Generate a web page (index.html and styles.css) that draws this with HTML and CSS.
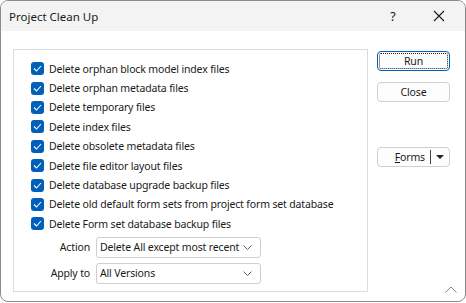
FILE: index.html
```html
<!DOCTYPE html>
<html lang="en">
<head>
    <meta charset="utf-8" />
    <title>Project Clean Up</title>
    <link rel="stylesheet" href="styles.css">
</head>
<body>
    <div class="window">
        <div class="titlebar">
            <span class="title">Project Clean Up</span>
            <span class="help">?</span>
            <span class="close">
                <svg width="12" height="12" viewBox="0 0 12 12"><path d="M1 1L11 11M11 1L1 11" stroke="#1a1a1a" stroke-width="1.1" fill="none"/></svg>
            </span>
        </div>
        <div class="content">
            <div class="group">
                <label class="check"><span class="box"><svg width="9" height="7" viewBox="0 0 9 7"><path d="M1 3.5L3.5 6L8 1" stroke="#fff" stroke-width="1.1" fill="none"/></svg></span>Delete orphan block model index files</label>
                <label class="check"><span class="box"><svg width="9" height="7" viewBox="0 0 9 7"><path d="M1 3.5L3.5 6L8 1" stroke="#fff" stroke-width="1.1" fill="none"/></svg></span>Delete orphan metadata files</label>
                <label class="check"><span class="box"><svg width="9" height="7" viewBox="0 0 9 7"><path d="M1 3.5L3.5 6L8 1" stroke="#fff" stroke-width="1.1" fill="none"/></svg></span>Delete temporary files</label>
                <label class="check"><span class="box"><svg width="9" height="7" viewBox="0 0 9 7"><path d="M1 3.5L3.5 6L8 1" stroke="#fff" stroke-width="1.1" fill="none"/></svg></span>Delete index files</label>
                <label class="check"><span class="box"><svg width="9" height="7" viewBox="0 0 9 7"><path d="M1 3.5L3.5 6L8 1" stroke="#fff" stroke-width="1.1" fill="none"/></svg></span>Delete obsolete metadata files</label>
                <label class="check"><span class="box"><svg width="9" height="7" viewBox="0 0 9 7"><path d="M1 3.5L3.5 6L8 1" stroke="#fff" stroke-width="1.1" fill="none"/></svg></span>Delete file editor layout files</label>
                <label class="check"><span class="box"><svg width="9" height="7" viewBox="0 0 9 7"><path d="M1 3.5L3.5 6L8 1" stroke="#fff" stroke-width="1.1" fill="none"/></svg></span>Delete database upgrade backup files</label>
                <label class="check"><span class="box"><svg width="9" height="7" viewBox="0 0 9 7"><path d="M1 3.5L3.5 6L8 1" stroke="#fff" stroke-width="1.1" fill="none"/></svg></span>Delete old default form sets from project form set database</label>
                <label class="check"><span class="box"><svg width="9" height="7" viewBox="0 0 9 7"><path d="M1 3.5L3.5 6L8 1" stroke="#fff" stroke-width="1.1" fill="none"/></svg></span>Delete Form set database backup files</label>

                <div class="field first">
                    <span class="flabel">Action</span>
                    <div class="combo">
                        <span>Delete All except most recent</span>
                        <svg width="9" height="5" viewBox="0 0 9 5"><path d="M0.5 0.5L4.5 4.5L8.5 0.5" stroke="#555" stroke-width="0.9" fill="none"/></svg>
                    </div>
                </div>
                <div class="field">
                    <span class="flabel">Apply to</span>
                    <div class="combo">
                        <span>All Versions</span>
                        <svg width="9" height="5" viewBox="0 0 9 5"><path d="M0.5 0.5L4.5 4.5L8.5 0.5" stroke="#555" stroke-width="0.9" fill="none"/></svg>
                    </div>
                </div>
            </div>

            <div class="buttons">
                <div class="btn default"><span>Run</span></div>
                <div class="btn">Close</div>
                <div class="btn forms">
                    <span class="fl"><u>F</u>orms</span>
                    <span class="sep"></span>
                    <span class="arrow"></span>
                </div>
            </div>
        </div>
        <svg class="grip" width="12" height="7" viewBox="0 0 12 7"><path d="M0.5 6.5L6 1L11.5 6.5" stroke="#777" stroke-width="0.9" fill="none"/></svg>
    </div>
</body>
</html>
```

FILE: styles.css
```css
* {
    margin: 0;
    padding: 0;
    box-sizing: border-box;
}

body {
    background: #ffffff;
    font-family: 'Noto Sans', 'Open Sans', sans-serif;
    font-size: 10.5px;
    letter-spacing: -0.15px;
    color: #1a1a1a;
}

.window {
    width: 466px;
    height: 302px;
    border: 1px solid #8a8a8a;
    border-radius: 8px;
    overflow: hidden;
    background: #fff;
    position: relative;
}

.titlebar {
    height: 30px;
    background: #f3f3f3;
    display: flex;
    align-items: center;
    padding-left: 8px;
}

    .titlebar .title {
        flex: 1;
        font-size: 11.5px;
        letter-spacing: 0;
    }

    .titlebar .help {
        width: 46px;
        text-align: center;
        font-size: 12.5px;
    }

    .titlebar .close {
        width: 46px;
        display: flex;
        justify-content: center;
        margin-right: 3px;
    }

.content {
    display: flex;
    padding: 18px 0 0 12px;
}

.group {
    width: 355px;
    height: 243px;
    border: 1px solid #dcdcdc;
    padding: 9px 0 0 17px;
    display: flex;
    flex-direction: column;
}

.check {
    display: flex;
    align-items: center;
    height: 19.4px;
    white-space: nowrap;
}

    .check .box {
        width: 13px;
        height: 13px;
        background: #005fb8;
        border-radius: 3px;
        margin-right: 5px;
        display: flex;
        align-items: center;
        justify-content: center;
    }

.field {
    display: flex;
    align-items: center;
    margin-top: 5px;
}

    .field.first {
        margin-top: 3px;
    }

.flabel {
    width: 59px;
    text-align: right;
    margin-right: 6px;
}

.combo {
    width: 165px;
    height: 21px;
    border: 1px solid #cfcfcf;
    border-radius: 3px;
    display: flex;
    align-items: center;
    justify-content: space-between;
    padding: 0 8px 0 3px;
    white-space: nowrap;
}

.buttons {
    display: flex;
    flex-direction: column;
    padding: 2px 0 0 9px;
}

.btn {
    width: 73px;
    height: 20px;
    border: 1px solid #d0d0d0;
    border-radius: 4px;
    display: flex;
    align-items: center;
    justify-content: center;
    margin-bottom: 11px;
    background: #fdfdfd;
}

    .btn.default {
        border: 1px solid #005fb8;
        padding: 1px;
    }

        .btn.default span {
            flex: 1;
            align-self: stretch;
            border: 1px dotted #222;
            display: flex;
            align-items: center;
            justify-content: center;
            border-radius: 2px;
        }

    .btn.forms {
        margin-top: 34px;
        justify-content: flex-end;
        padding-right: 5px;
    }

        .btn.forms .sep {
            width: 1px;
            height: 14px;
            background: #444;
            margin: 0 5px 0 5px;
        }

        .btn.forms .arrow {
            width: 0;
            height: 0;
            border-left: 4px solid transparent;
            border-right: 4px solid transparent;
            border-top: 4px solid #222;
        }

.grip {
    position: absolute;
    right: 8px;
    bottom: 8px;
}
```
